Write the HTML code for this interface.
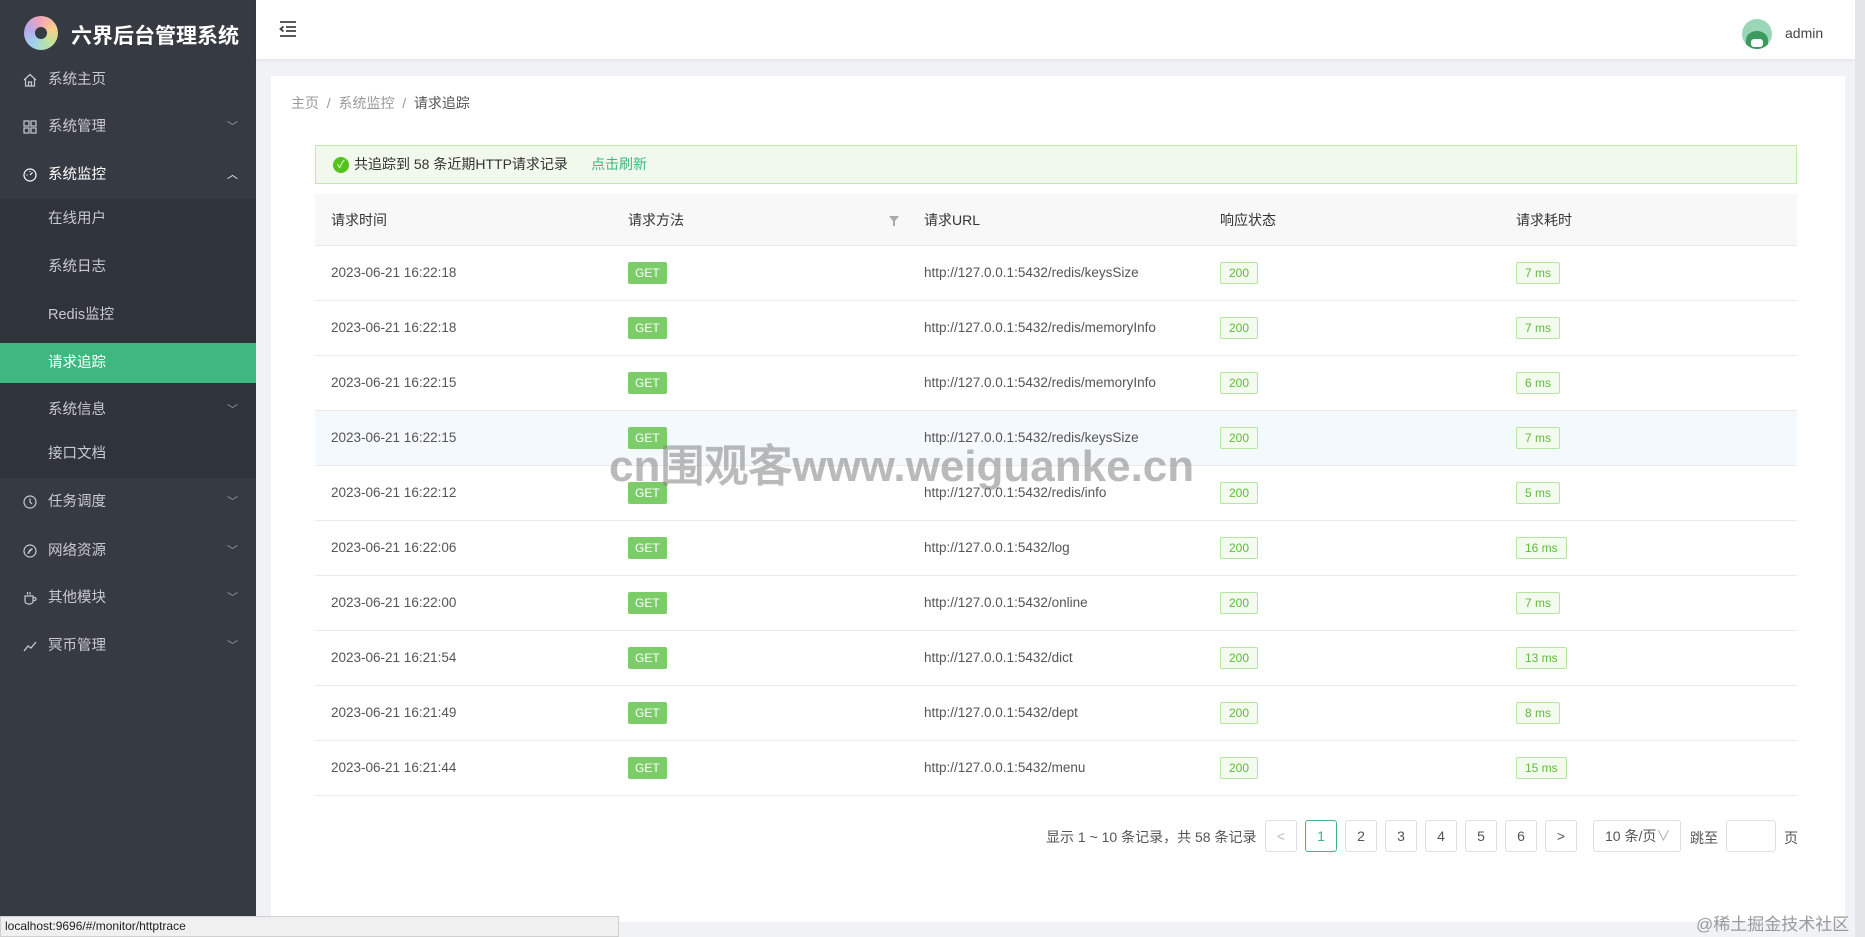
<!DOCTYPE html>
<html><head><meta charset="utf-8"><style>
*{margin:0;padding:0;box-sizing:border-box}
body{width:1865px;height:937px;overflow:hidden;background:#f0f2f5;font-family:"Liberation Sans","Noto Sans CJK SC",sans-serif;position:relative;color:#606266}
.side{position:absolute;left:0;top:0;width:256px;height:937px;background:#363a42}
.logo{position:absolute;left:24px;top:16px;width:34px;height:34px;border-radius:50%;background:conic-gradient(#f3a6b8,#f8d08a,#b9e4a0,#9fd3f0,#b8a8e8,#f3a6b8)}
.logo:after{content:"";position:absolute;left:11px;top:11px;width:12px;height:12px;border-radius:50%;background:#363a42}
.title{position:absolute;left:71px;top:20px;color:#fff;font-size:21px;font-weight:bold}
.mi{position:absolute;left:0;width:256px;height:48px;line-height:48px;color:#c8cad0;font-size:14.5px}
.mi .t{position:absolute;left:48px}
.mi .ic{position:absolute;left:23px;top:17px;width:14px;height:14px}
.mi .ar{position:absolute;right:18px;top:0;font-size:11px;color:#9a9da3}
.sub{position:absolute;left:0;top:199px;width:256px;height:279px;background:#2f333a}
.act{background:#3eb780;color:#fff}
.hdr{position:absolute;left:256px;top:0;width:1599px;height:59px;background:#fff;box-shadow:0 1px 4px rgba(0,0,0,.08)}
.card{position:absolute;left:271px;top:76px;width:1574px;height:846px;background:#fff}
.scroll{position:absolute;right:0;top:0;width:10px;height:937px;background:#e4e5e7}
.bc{position:absolute;left:291px;top:93px;font-size:14px;color:#999}
.bc b{font-weight:normal;color:#555}
.alert{position:absolute;left:315px;top:145px;width:1482px;height:39px;border:1px solid #c1e8a9;background:#f0f9eb;font-size:14px;color:#333;line-height:37px}
.tbl{position:absolute;left:315px;top:194px;width:1482px}
.th{height:52px;background:#f8f8f9;border-bottom:1px solid #e8eaec;position:relative;font-size:14px;color:#333}
.tr{height:55px;border-bottom:1px solid #e8eaec;position:relative;font-size:13.5px;color:#555}
.c{position:absolute;top:0;line-height:inherit}
.th .c{line-height:52px}.tr .c{line-height:54px}
.get{display:inline-block;background:#7ccd6a;color:#fff;font-size:12px;line-height:22px;height:22px;padding:0 7px;border-radius:2px;vertical-align:middle}
.tag{display:inline-block;background:#f3fbef;border:1px solid #b5e59f;color:#5fbb3a;font-size:12px;line-height:20px;height:22px;padding:0 8px;border-radius:2px;vertical-align:middle}
.pg{position:absolute;top:820px;height:32px;border:1px solid #dcdfe6;border-radius:3px;text-align:center;line-height:30px;font-size:14px;color:#555;background:#fff}
.wm{position:absolute;left:609px;top:430px;font-size:44px;font-weight:bold;color:rgba(130,130,130,.55);font-family:"Liberation Sans","WenQuanYi Zen Hei",sans-serif}
</style></head><body>
<div class="side">
 <div class="logo"></div><div class="title">六界后台管理系统</div>
 <div class="sub"></div>
 <div class="mi" style="top:56px"><svg class="ic" viewBox="0 0 14 14" fill="none" stroke="#c8cad0" stroke-width="1.2"><path d="M1 7L7 1.5 13 7M2.5 5.8V13h9V5.8M5.5 13V9h3v4"/></svg><span class="t">系统主页</span></div>
 <div class="mi" style="top:103px"><svg class="ic" viewBox="0 0 14 14" fill="none" stroke="#c8cad0" stroke-width="1.2"><rect x="1" y="1" width="5" height="5"/><rect x="8" y="1" width="5" height="5"/><rect x="1" y="8" width="5" height="5"/><rect x="8" y="8" width="5" height="5"/></svg><span class="t">系统管理</span><span class="ar">﹀</span></div>
 <div class="mi" style="top:151px;color:#fff"><svg class="ic" viewBox="0 0 14 14" fill="none" stroke="#fff" stroke-width="1.2"><circle cx="7" cy="7" r="6"/><path d="M7 7L9.5 4.5M3.5 7h1M7 3v1"/></svg><span class="t">系统监控</span><span class="ar" style="color:#fff">︿</span></div>
 <div class="mi" style="top:195px"><span class="t">在线用户</span></div>
 <div class="mi" style="top:243px"><span class="t">系统日志</span></div>
 <div class="mi" style="top:291px"><span class="t">Redis监控</span></div>
 <div class="mi act" style="top:343px;height:40px;line-height:40px"><span class="t">请求追踪</span></div>
 <div class="mi" style="top:386px"><span class="t">系统信息</span><span class="ar">﹀</span></div>
 <div class="mi" style="top:430px"><span class="t">接口文档</span></div>
 <div class="mi" style="top:478px"><svg class="ic" viewBox="0 0 14 14" fill="none" stroke="#c8cad0" stroke-width="1.2"><circle cx="7" cy="7" r="6"/><path d="M7 3.5V7l2 2"/></svg><span class="t">任务调度</span><span class="ar">﹀</span></div>
 <div class="mi" style="top:527px"><svg class="ic" viewBox="0 0 14 14" fill="none" stroke="#c8cad0" stroke-width="1.2"><circle cx="7" cy="7" r="6"/><path d="M4.5 9.5L9.5 4.5M6 9.5c-1-2 1-4 3.5-5"/></svg><span class="t">网络资源</span><span class="ar">﹀</span></div>
 <div class="mi" style="top:574px"><svg class="ic" viewBox="0 0 14 14" fill="none" stroke="#c8cad0" stroke-width="1.2"><path d="M2 5h8v5a3 3 0 0 1-3 3H5a3 3 0 0 1-3-3zM10 6.5h1.5a1.5 1.5 0 0 1 0 3H10M4.5 1v2.5M7 1v2.5"/></svg><span class="t">其他模块</span><span class="ar">﹀</span></div>
 <div class="mi" style="top:622px"><svg class="ic" viewBox="0 0 14 14" fill="none" stroke="#c8cad0" stroke-width="1.3"><path d="M1 12l4-5 3 2 5-6"/></svg><span class="t">冥币管理</span><span class="ar">﹀</span></div>
</div>
<div class="hdr">
 <svg style="position:absolute;left:23px;top:21px" width="18" height="16" viewBox="0 0 18 16" fill="none" stroke="#444" stroke-width="1.8"><path d="M1 1h16M7 6h10M7 10h10M1 15h16M4.5 5.5L1.5 8l3 2.5"/></svg>
 <div style="position:absolute;left:1486px;top:19px;width:30px;height:30px;border-radius:50%;background:#9ad6b8;overflow:hidden"><div style="position:absolute;left:4px;top:12px;width:22px;height:18px;border-radius:50% 50% 0 0;background:#3c9a5f"></div><div style="position:absolute;left:9px;top:20px;width:12px;height:8px;background:#fff;border-radius:3px"></div></div>
 <div style="position:absolute;left:1529px;top:25px;font-size:14px;color:#444">admin</div>
</div>
<div class="scroll"></div>
<div class="card"></div>
<div class="bc">主页 &nbsp;/&nbsp; 系统监控 &nbsp;/&nbsp; <b>请求追踪</b></div>
<div class="alert"><span style="position:absolute;left:17px;top:11px;width:16px;height:16px;border-radius:50%;background:#52c41a;color:#fff;font-size:11px;line-height:16px;text-align:center">✓</span><span style="position:absolute;left:38px">共追踪到 58 条近期HTTP请求记录</span><span style="position:absolute;left:275px;color:#3eb780">点击刷新</span></div>
<div class="tbl">
 <div class="th"><span class="c" style="left:16px">请求时间</span><span class="c" style="left:313px">请求方法</span><svg style="position:absolute;left:574px;top:22px" width="10" height="10" viewBox="0 0 10 10"><path d="M0 0h10L6 5v5H4V5z" fill="#aaa"/></svg><span class="c" style="left:609px">请求URL</span><span class="c" style="left:905px">响应状态</span><span class="c" style="left:1201px">请求耗时</span></div>
 <div class="tr"><span class="c" style="left:16px">2023-06-21 16:22:18</span><span class="c" style="left:313px"><span class="get">GET</span></span><span class="c" style="left:609px">http://127.0.0.1:5432/redis/keysSize</span><span class="c" style="left:905px"><span class="tag">200</span></span><span class="c" style="left:1201px"><span class="tag">7 ms</span></span></div>
 <div class="tr"><span class="c" style="left:16px">2023-06-21 16:22:18</span><span class="c" style="left:313px"><span class="get">GET</span></span><span class="c" style="left:609px">http://127.0.0.1:5432/redis/memoryInfo</span><span class="c" style="left:905px"><span class="tag">200</span></span><span class="c" style="left:1201px"><span class="tag">7 ms</span></span></div>
 <div class="tr"><span class="c" style="left:16px">2023-06-21 16:22:15</span><span class="c" style="left:313px"><span class="get">GET</span></span><span class="c" style="left:609px">http://127.0.0.1:5432/redis/memoryInfo</span><span class="c" style="left:905px"><span class="tag">200</span></span><span class="c" style="left:1201px"><span class="tag">6 ms</span></span></div>
 <div class="tr" style="background:#f3f9fd"><span class="c" style="left:16px">2023-06-21 16:22:15</span><span class="c" style="left:313px"><span class="get">GET</span></span><span class="c" style="left:609px">http://127.0.0.1:5432/redis/keysSize</span><span class="c" style="left:905px"><span class="tag">200</span></span><span class="c" style="left:1201px"><span class="tag">7 ms</span></span></div>
 <div class="tr"><span class="c" style="left:16px">2023-06-21 16:22:12</span><span class="c" style="left:313px"><span class="get">GET</span></span><span class="c" style="left:609px">http://127.0.0.1:5432/redis/info</span><span class="c" style="left:905px"><span class="tag">200</span></span><span class="c" style="left:1201px"><span class="tag">5 ms</span></span></div>
 <div class="tr"><span class="c" style="left:16px">2023-06-21 16:22:06</span><span class="c" style="left:313px"><span class="get">GET</span></span><span class="c" style="left:609px">http://127.0.0.1:5432/log</span><span class="c" style="left:905px"><span class="tag">200</span></span><span class="c" style="left:1201px"><span class="tag">16 ms</span></span></div>
 <div class="tr"><span class="c" style="left:16px">2023-06-21 16:22:00</span><span class="c" style="left:313px"><span class="get">GET</span></span><span class="c" style="left:609px">http://127.0.0.1:5432/online</span><span class="c" style="left:905px"><span class="tag">200</span></span><span class="c" style="left:1201px"><span class="tag">7 ms</span></span></div>
 <div class="tr"><span class="c" style="left:16px">2023-06-21 16:21:54</span><span class="c" style="left:313px"><span class="get">GET</span></span><span class="c" style="left:609px">http://127.0.0.1:5432/dict</span><span class="c" style="left:905px"><span class="tag">200</span></span><span class="c" style="left:1201px"><span class="tag">13 ms</span></span></div>
 <div class="tr"><span class="c" style="left:16px">2023-06-21 16:21:49</span><span class="c" style="left:313px"><span class="get">GET</span></span><span class="c" style="left:609px">http://127.0.0.1:5432/dept</span><span class="c" style="left:905px"><span class="tag">200</span></span><span class="c" style="left:1201px"><span class="tag">8 ms</span></span></div>
 <div class="tr"><span class="c" style="left:16px">2023-06-21 16:21:44</span><span class="c" style="left:313px"><span class="get">GET</span></span><span class="c" style="left:609px">http://127.0.0.1:5432/menu</span><span class="c" style="left:905px"><span class="tag">200</span></span><span class="c" style="left:1201px"><span class="tag">15 ms</span></span></div>
</div>
<div style="position:absolute;left:1046px;top:827px;font-size:14px;color:#555">显示 1 ~ 10 条记录，共 58 条记录</div>
<div class="pg" style="left:1265px;width:32px;color:#bbb">&lt;</div>
<div class="pg" style="left:1305px;width:32px;border-color:#3eb780;color:#3eb780">1</div>
<div class="pg" style="left:1345px;width:32px">2</div>
<div class="pg" style="left:1385px;width:32px">3</div>
<div class="pg" style="left:1425px;width:32px">4</div>
<div class="pg" style="left:1465px;width:32px">5</div>
<div class="pg" style="left:1505px;width:32px">6</div>
<div class="pg" style="left:1545px;width:32px">&gt;</div>
<div class="pg" style="left:1593px;width:88px;text-align:left;padding-left:11px">10 条/页<span style="color:#aaa">∨</span></div>
<div style="position:absolute;left:1690px;top:828px;font-size:14px;color:#555">跳至</div>
<div class="pg" style="left:1726px;width:50px"></div>
<div style="position:absolute;left:1784px;top:828px;font-size:14px;color:#555">页</div>
<div class="wm">cn围观客www.weiguanke.cn</div>
<div style="position:absolute;left:0;top:916px;width:619px;height:21px;background:#f0f0f0;border:1px solid #d0d0d0;font-size:12px;color:#222;line-height:19px;padding-left:4px">localhost:9696/#/monitor/httptrace</div>
<div style="position:absolute;left:1696px;top:910px;font-size:17px;color:#9a9a9a">@稀土掘金技术社区</div>
</body></html>
